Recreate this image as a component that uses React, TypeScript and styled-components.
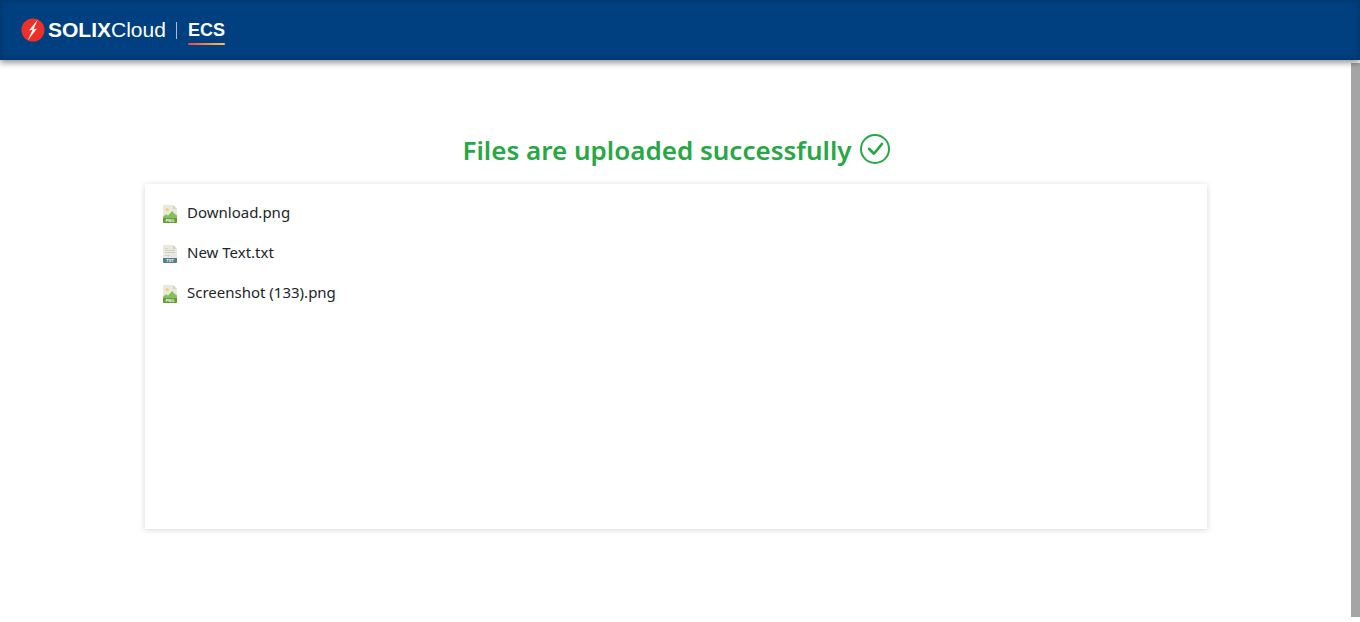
import React from "react";
import styled, { createGlobalStyle } from "styled-components";

const GlobalStyle = createGlobalStyle`
  * { box-sizing: border-box; }
  body {
    margin: 0;
    background: #fff;
    color: #212529;
    font-family: "Segoe UI", "Noto Sans", "Open Sans", sans-serif;
    font-size: 15px;
    line-height: 24px;
  }
`;

const Page = styled.div`
  display: flex;
  flex-direction: column;
  height: 100vh;
`;

const Header = styled.header`
  position: relative;
  flex: none;
  display: flex;
  align-items: center;
  height: 60px;
  padding: 0 21px;
  background: #004080;
  box-shadow: inset 0 0 6px rgba(0, 0, 0, 0.25), 0 3px 6px rgba(0, 0, 0, 0.4);
  color: #fff;
  font-family: "Liberation Sans", Arial, sans-serif;
`;

const Brand = styled.a`
  display: flex;
  align-items: center;
  color: inherit;
  text-decoration: none;
`;

const BrandName = styled.span`
  margin-left: 3px;
  font-size: 21px;
`;

const Divider = styled.span`
  width: 1px;
  height: 17px;
  margin: 0 11px 0 10px;
  background: #a9bfd4;
`;

const Product = styled.span`
  display: flex;
  flex-direction: column;
  gap: 3px;
  padding-top: 4px;
  font-size: 18px;
  font-weight: 700;
  line-height: 20px;

  &::after {
    content: "";
    height: 2px;
    border-radius: 1px;
    background: linear-gradient(90deg, #f0483e, #fbc24c);
  }
`;

const Body = styled.div`
  flex: 1;
  display: flex;
  min-height: 0;
`;

const Content = styled.main`
  flex: 1;
  padding: 70px 144px 0 145px;
`;

const ScrollTrack = styled.div`
  width: 9px;
  margin: 3px 0 5px;
  background: #a5a5a5;
`;

const Title = styled.h1`
  display: flex;
  align-items: flex-start;
  justify-content: center;
  gap: 8px;
  margin: 0 0 14px;
  color: #28a745;
  font-size: 26px;
  font-weight: 600;
  line-height: 40px;
  white-space: nowrap;

  svg {
    margin-top: 4px;
  }
`;

const FileList = styled.ul`
  display: flex;
  flex-direction: column;
  gap: 16px;
  min-height: 345px;
  margin: 0;
  padding: 16px 18px;
  list-style: none;
  background: #fff;
  box-shadow: 0 1px 6px rgba(0, 0, 0, 0.17);
`;

const FileItem = styled.li`
  display: flex;
  align-items: center;
  gap: 10px;

  svg {
    flex: none;
    margin-top: 4px;
  }
`;

const BoltLogo = () => (
  <svg width="24" height="24" viewBox="0 0 24 24" aria-hidden="true">
    <circle cx="12" cy="12" r="11.5" fill="#ee3128" />
    <path d="M16.8 1.6 8 12.6l3.6-.9-4.9 10.8 9.3-12-3.6 1z" fill="#fff" />
  </svg>
);

const CheckCircle = () => (
  <svg width="30" height="30" viewBox="0 0 30 30" fill="none" stroke="#28a745" aria-hidden="true">
    <circle cx="15" cy="15" r="14" strokeWidth="2" />
    <path d="M9 14.8l5 4.9 8-9.8" strokeWidth="2.6" strokeLinecap="round" strokeLinejoin="round" />
  </svg>
);

type Kind = "png" | "txt";

const FileIcon = ({ kind }: { kind: Kind }) => (
  <svg width="14" height="18" viewBox="0 0 14 18" aria-hidden="true">
    <path d="M1 0h9l4 4v14H0V1a1 1 0 0 1 1-1z" fill="#e9e9e0" />
    <path d="M10 0v4h4z" fill="#d2d2c5" />
    {kind === "png" ? (
      <>
        <circle cx="4.2" cy="4.7" r="1.6" fill="#f3d55b" />
        <path d="M0 13V11.8l3-2.6 2 1.3 4.2-4.6 2.1 2.6 2.7 2V13z" fill="#88c057" />
      </>
    ) : (
      <path d="M2 3.5h3M2 5.5h10M2 7.5h10M2 10.5h5" stroke="#d3d1c8" strokeWidth="1" />
    )}
    <path d="M0 13h14v4a1 1 0 0 1-1 1H1a1 1 0 0 1-1-1z" fill={kind === "png" ? "#659c35" : "#557f93"} />
    <text
      x="7"
      y="17"
      textAnchor="middle"
      fill="#fff"
      fontFamily="Liberation Sans, Arial, sans-serif"
      fontSize="4"
      fontWeight="700"
    >
      {kind.toUpperCase()}
    </text>
  </svg>
);

const files: { name: string; kind: Kind }[] = [
  { name: "Download.png", kind: "png" },
  { name: "New Text.txt", kind: "txt" },
  { name: "Screenshot (133).png", kind: "png" },
];

export default function App() {
  return (
    <Page>
      <GlobalStyle />
      <Header>
        <Brand href="#">
          <BoltLogo />
          <BrandName>
            <b>SOLIX</b>Cloud
          </BrandName>
          <Divider />
          <Product>ECS</Product>
        </Brand>
      </Header>
      <Body>
        <Content>
          <Title>
            Files are uploaded successfully
            <CheckCircle />
          </Title>
          <FileList>
            {files.map((file) => (
              <FileItem key={file.name}>
                <FileIcon kind={file.kind} />
                {file.name}
              </FileItem>
            ))}
          </FileList>
        </Content>
        <ScrollTrack />
      </Body>
    </Page>
  );
}
